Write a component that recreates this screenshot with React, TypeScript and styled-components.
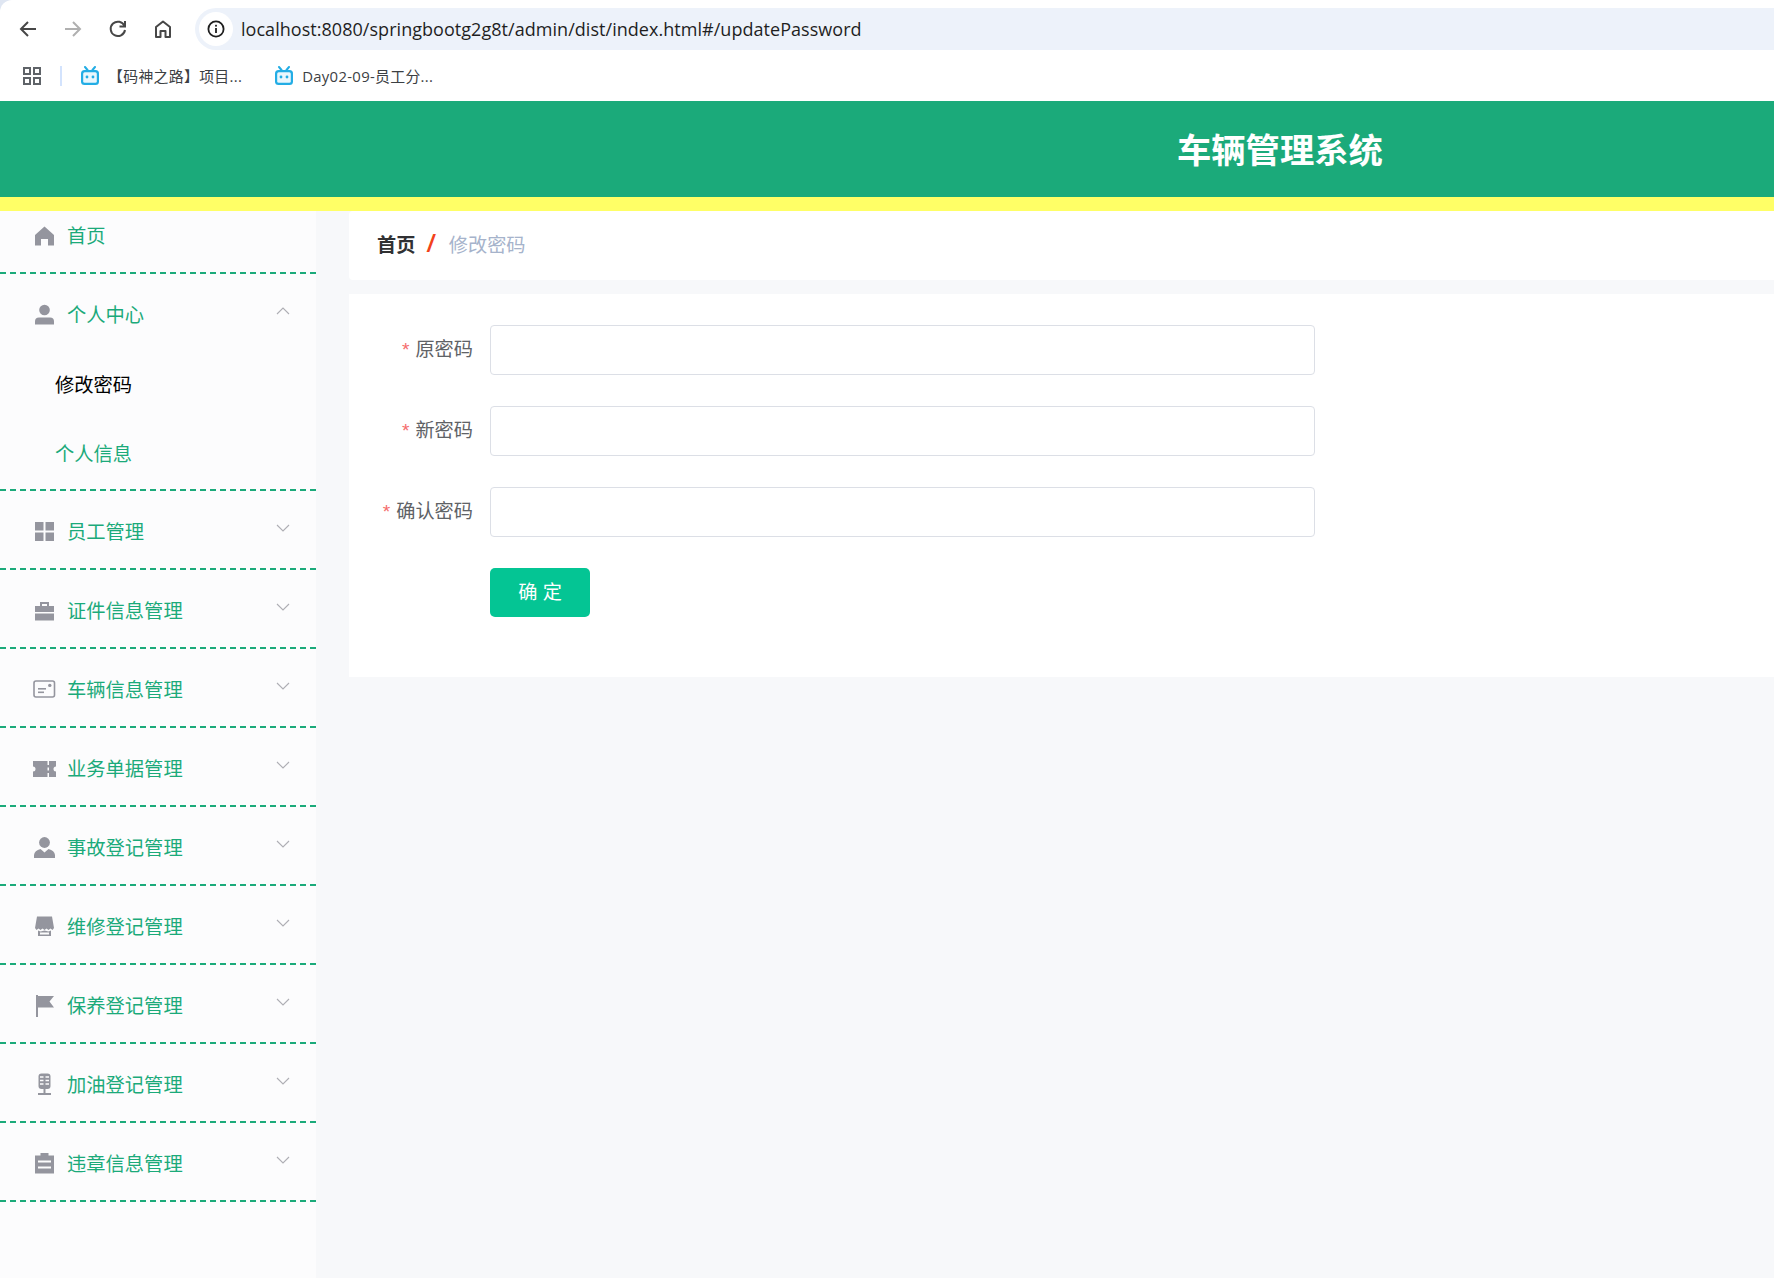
import React from "react";
import styled, { createGlobalStyle } from "styled-components";

const FONT = `"Liberation Sans", "Noto Sans CJK SC", sans-serif`;

const GlobalStyle = createGlobalStyle`
  html, body {
    margin: 0;
    padding: 0;
    background: #dfe6f2;
    overflow: hidden;
  }
  * {
    box-sizing: border-box;
  }
`;

const Page = styled.div`
  width: 1774px;
  height: 1278px;
  font-family: ${FONT};
  display: flex;
  flex-direction: column;
`;

/* browser chrome */
const BrowserTop = styled.div`
  height: 101px;
  background: #fff;
  border-top-left-radius: 12px;
`;

const Toolbar = styled.div`
  height: 58px;
  padding-top: 8px;
  display: flex;
  align-items: flex-start;
`;

const NavButton = styled.span`
  width: 45px;
  height: 42px;
  display: flex;
  align-items: center;
  justify-content: center;
  flex: none;
`;

const NavGroup = styled.div`
  width: 195px;
  padding-left: 5px;
  display: flex;
`;

const AddressBar = styled.div`
  flex: 1;
  height: 42px;
  display: flex;
  align-items: center;
  background: #edf2fa;
  border-radius: 21px 0 0 21px;
  padding-left: 4px;
`;

const InfoBadge = styled.span`
  width: 34px;
  height: 34px;
  border-radius: 50%;
  background: #fff;
  display: flex;
  align-items: center;
  justify-content: center;
  margin-right: 8px;
`;

const UrlText = styled.span`
  font-family: "Open Sans", ${FONT};
  font-size: 18px;
  color: #1f1f1f;
  letter-spacing: 0.04px;
`;

const BookmarkBar = styled.div`
  height: 43px;
  padding: 0 0 8px 21px;
  display: flex;
  align-items: center;
`;

const BookmarkDivider = styled.span`
  width: 2px;
  height: 20px;
  background: #d3e3fd;
  margin: 0 18px 0 17px;
`;

const Bookmark = styled.span`
  display: flex;
  align-items: center;
  gap: 8px;
  margin-right: 32px;
  font-family: "Open Sans", ${FONT};
  font-size: 14.9px;
  letter-spacing: 0.3px;
  color: #3c4043;
`;

/* app header */
const AppHeader = styled.header`
  height: 110px;
  background: #1baa7a;
  border-bottom: 14px solid #ffff66;
  padding-left: 1177px;
  display: flex;
  align-items: center;
`;

const AppTitle = styled.h1`
  margin: -2px 0 0;
  font-size: 34.3px;
  font-weight: 700;
  color: #fff;
`;

const Body = styled.div`
  flex: 1;
  display: flex;
  background: #f7f8fa;
`;

/* sidebar */
const Sidebar = styled.nav`
  width: 316px;
  flex: none;
  background: #fcfcfd;
`;

const MenuGroup = styled.div`
  border-bottom: 2px dashed #1baa7a;
`;

const MenuRow = styled.div<{ $height: number; $top?: number; $bottom?: number }>`
  height: ${(p) => p.$height}px;
  padding: ${(p) => p.$top ?? 0}px 26px ${(p) => p.$bottom ?? 0}px 32px;
  display: flex;
  align-items: center;
`;

const MenuIcon = styled.span`
  width: 24px;
  height: 24px;
  flex: none;
  margin: -2px 11px 0 0;
  color: #94959e;
`;

const MenuLabel = styled.span`
  flex: 1;
  font-size: 19.3px;
  line-height: 28px;
  color: #1baa7a;
`;

const Chevron = styled.svg`
  width: 14px;
  height: 8px;
  margin-top: -9px;
  flex: none;
`;

const SubList = styled.div`
  padding: 0;
`;

const SubItem = styled.div<{ $active?: boolean }>`
  height: 69px;
  padding-left: 55px;
  font-size: 19.3px;
  line-height: 69px;
  color: ${(p) => (p.$active ? "#000" : "#1baa7a")};
`;

/* main */
const Main = styled.main`
  flex: 1;
  padding-left: 33px;
`;

const Breadcrumb = styled.div`
  height: 69px;
  margin-bottom: 14px;
  padding: 0 0 4px 28px;
  background: #fff;
  border-radius: 4px 0 0 4px;
  display: flex;
  align-items: center;
  font-size: 19.2px;
`;

const CrumbRoot = styled.span`
  font-weight: 700;
  color: #303133;
`;

const CrumbSlash = styled.span`
  margin: 0 15px 0 12px;
  font-size: 23px;
  line-height: 24px;
  font-weight: 700;
  font-style: italic;
  color: #f2421b;
`;

const CrumbCurrent = styled.span`
  color: #a6b3cb;
`;

const FormPanel = styled.form`
  height: 383px;
  padding-top: 31px;
  background: #fff;
`;

const FormRow = styled.div`
  display: flex;
  align-items: center;
  height: 50px;
  margin-bottom: 31px;
`;

const FieldLabel = styled.label`
  width: 124px;
  margin-right: 17px;
  margin-top: -4px;
  text-align: right;
  font-size: 19.2px;
  color: #606266;
`;

const Required = styled.span`
  margin-right: 6px;
  color: #f56c6c;
  font-size: 19.2px;
`;

const TextField = styled.input`
  width: 825px;
  height: 50px;
  border: 1px solid #dcdfe6;
  border-radius: 4px;
  background: #fff;
  outline: none;
`;

const SubmitRow = styled.div`
  padding-left: 141px;
`;

const SubmitButton = styled.button`
  width: 100px;
  height: 49px;
  border: none;
  border-radius: 5px;
  background: #04c594;
  color: #fff;
  font-family: ${FONT};
  font-size: 19.2px;
  padding: 0 0 4px;
`;

/* icons */
const Icon24 = ({ children }: { children: React.ReactNode }) => (
  <svg width="24" height="24" viewBox="0 0 24 24" fill="currentColor">
    {children}
  </svg>
);

const HomeIcon = () => (
  <Icon24>
    <path d="M12.5 2.5 L22 11 V21.5 H16 V15 H9 V21.5 H3 V11 Z" />
  </Icon24>
);
const UserIcon = () => (
  <Icon24>
    <circle cx="12.5" cy="7" r="5.3" />
    <path d="M3 21.5 V18.5 Q3 14.5 7 14.5 H18 Q22 14.5 22 18.5 V21.5 Z" />
  </Icon24>
);
const GridIcon = () => (
  <Icon24>
    <rect x="3" y="2" width="8.5" height="8.5" />
    <rect x="13.5" y="2" width="8.5" height="8.5" />
    <rect x="3" y="12.5" width="8.5" height="8.5" />
    <rect x="13.5" y="12.5" width="8.5" height="8.5" />
  </Icon24>
);
const BriefcaseIcon = () => (
  <Icon24>
    <path d="M8 7 V3 H17 V7 H15 V5 H10 V7 Z" />
    <rect x="3" y="7" width="19" height="6" />
    <rect x="3" y="14.5" width="19" height="7" />
  </Icon24>
);
const PostcardIcon = () => (
  <Icon24>
    <rect x="2" y="3" width="20.5" height="16" rx="2" fill="none" stroke="currentColor" strokeWidth="1.6" />
    <rect x="6" y="10" width="8" height="1.6" />
    <rect x="6" y="13.5" width="6" height="1.6" />
    <circle cx="17.8" cy="7.4" r="1.7" />
  </Icon24>
);
const TicketIcon = () => (
  <Icon24>
    <path
      fillRule="evenodd"
      d="M1 4 H24 V9.5 A2.5 2.5 0 0 0 24 14.5 V20 H1 V14.5 A2.5 2.5 0 0 0 1 9.5 Z M15.5 4 V8 H17 V4 Z M15.5 10.5 V13.5 H17 V10.5 Z M15.5 16 V20 H17 V16 Z"
    />
  </Icon24>
);
const CustomIcon = () => (
  <Icon24>
    <circle cx="12.5" cy="6.5" r="5.4" />
    <path d="M2 22 V19 Q2.5 14.5 8.5 13 L12.5 16.5 L16.5 13 Q22.5 14.5 23 19 V22 Z" />
  </Icon24>
);
const ShopIcon = () => (
  <Icon24>
    <path d="M5 1.5 H20 L22 13 L20.5 15 L18.5 13.5 L16.5 15 L14.5 13.5 L12.5 15 L10.5 13.5 L8.5 15 L6.5 13.5 L4.5 15 L3 13 Z" />
    <path fillRule="evenodd" d="M6 15.5 L8.5 16.5 L12.5 15.5 L16.5 16.5 L19 15.5 V21 H6 Z M8 17.5 V19.5 H17 V17.5 Z" />
  </Icon24>
);
const FlagIcon = () => (
  <Icon24>
    <rect x="4" y="1" width="2" height="22" />
    <path d="M6 2 H22 L17.5 7.5 L22 13.5 H6 Z" />
  </Icon24>
);
const MicIcon = () => (
  <Icon24>
    <path d="M9.5 0.5 H15.5 Q18.5 0.5 18.5 3.5 V13 Q18.5 16 15.5 16 H9.5 Q6.5 16 6.5 13 V3.5 Q6.5 0.5 9.5 0.5 Z" />
    <path d="M8 4 H11.5 M13.5 4 H17 M8 7.5 H11.5 M13.5 7.5 H17 M8 11 H11.5 M13.5 11 H17" stroke="#fcfcfd" strokeWidth="1.4" />
    <rect x="11.5" y="16" width="2" height="4" />
    <rect x="6" y="20" width="13" height="2" />
  </Icon24>
);
const OrderIcon = () => (
  <Icon24>
    <path
      fillRule="evenodd"
      d="M3 3.5 H8.5 V1 H16.5 V3.5 H22 V21.5 H3 Z M6 8.5 V10.5 H19 V8.5 Z M6 14.5 V16.5 H19 V14.5 Z"
    />
  </Icon24>
);

const BiliIcon = () => (
  <svg width="20" height="20" viewBox="0 0 20 20" fill="none">
    <path d="M5 1 L7.5 4 M15 1 L12.5 4" stroke="#23ade5" strokeWidth="2" strokeLinecap="round" />
    <rect x="1" y="4" width="18" height="15" rx="3.5" fill="#23ade5" />
    <rect x="3.2" y="6.2" width="13.6" height="10.6" rx="1.5" fill="#eaf7fd" />
    <circle cx="7" cy="11" r="1.4" fill="#23ade5" />
    <circle cx="13" cy="11" r="1.4" fill="#23ade5" />
  </svg>
);

type MenuEntry = { label: string; icon: React.ReactNode };

const menuEntries: MenuEntry[] = [
  { label: "员工管理", icon: <GridIcon /> },
  { label: "证件信息管理", icon: <BriefcaseIcon /> },
  { label: "车辆信息管理", icon: <PostcardIcon /> },
  { label: "业务单据管理", icon: <TicketIcon /> },
  { label: "事故登记管理", icon: <CustomIcon /> },
  { label: "维修登记管理", icon: <ShopIcon /> },
  { label: "保养登记管理", icon: <FlagIcon /> },
  { label: "加油登记管理", icon: <MicIcon /> },
  { label: "违章信息管理", icon: <OrderIcon /> },
];

const fields = ["原密码", "新密码", "确认密码"];

const Caret = ({ up }: { up?: boolean }) => (
  <Chevron viewBox="0 0 14 8">
    <polyline points={up ? "1,7 7,1 13,7" : "1,1 7,7 13,1"} fill="none" stroke="#aeaeb4" strokeWidth="1.1" />
  </Chevron>
);

const App = () => (
  <Page>
    <GlobalStyle />
    <BrowserTop>
      <Toolbar>
        <NavGroup>
          <NavButton>
            <svg width="20" height="20" viewBox="0 0 20 20" fill="none" stroke="#474747" strokeWidth="2">
              <path d="M18 10 H3 M10 3 L3 10 L10 17" />
            </svg>
          </NavButton>
          <NavButton>
            <svg width="20" height="20" viewBox="0 0 20 20" fill="none" stroke="#b0b0b0" strokeWidth="2">
              <path d="M2 10 H17 M10 3 L17 10 L10 17" />
            </svg>
          </NavButton>
          <NavButton>
            <svg width="20" height="20" viewBox="0 0 20 20" fill="none" stroke="#474747" strokeWidth="2">
              <path d="M16.5 7 A7.2 7.2 0 1 0 17 11" />
              <path d="M17 2 V7.5 H11.5" />
            </svg>
          </NavButton>
          <NavButton>
            <svg width="20" height="20" viewBox="0 0 20 20" fill="none" stroke="#474747" strokeWidth="2">
              <path d="M3 18 V8 L10 2.5 L17 8 V18 H12.5 V12 H7.5 V18 Z" strokeLinejoin="round" />
            </svg>
          </NavButton>
        </NavGroup>
        <AddressBar>
          <InfoBadge>
            <svg width="20" height="20" viewBox="0 0 20 20" fill="none">
              <circle cx="10" cy="10" r="7.6" stroke="#1f1f1f" strokeWidth="1.8" />
              <rect x="9.1" y="9" width="1.8" height="5" fill="#1f1f1f" />
              <rect x="9.1" y="5.8" width="1.8" height="1.8" fill="#1f1f1f" />
            </svg>
          </InfoBadge>
          <UrlText>localhost:8080/springbootg2g8t/admin/dist/index.html#/updatePassword</UrlText>
        </AddressBar>
      </Toolbar>
      <BookmarkBar>
        <svg width="22" height="22" viewBox="0 0 22 22" fill="none" stroke="#5f6368" strokeWidth="2">
          <rect x="3" y="3" width="6" height="6" />
          <rect x="13" y="3" width="6" height="6" />
          <rect x="3" y="13" width="6" height="6" />
          <rect x="13" y="13" width="6" height="6" />
        </svg>
        <BookmarkDivider />
        <Bookmark>
          <BiliIcon />
          【码神之路】项目...
        </Bookmark>
        <Bookmark>
          <BiliIcon />
          Day02-09-员工分...
        </Bookmark>
      </BookmarkBar>
    </BrowserTop>

    <AppHeader>
      <AppTitle>车辆管理系统</AppTitle>
    </AppHeader>

    <Body>
      <Sidebar>
        <MenuGroup>
          <MenuRow $height={61} $bottom={10}>
            <MenuIcon>
              <HomeIcon />
            </MenuIcon>
            <MenuLabel>首页</MenuLabel>
          </MenuRow>
        </MenuGroup>
        <MenuGroup>
          <MenuRow $height={77} $top={6}>
            <MenuIcon>
              <UserIcon />
            </MenuIcon>
            <MenuLabel>个人中心</MenuLabel>
            <Caret up />
          </MenuRow>
          <SubList>
            <SubItem $active>修改密码</SubItem>
            <SubItem>个人信息</SubItem>
          </SubList>
        </MenuGroup>
        {menuEntries.map((entry) => (
          <MenuGroup key={entry.label}>
            <MenuRow $height={77} $top={6}>
              <MenuIcon>{entry.icon}</MenuIcon>
              <MenuLabel>{entry.label}</MenuLabel>
              <Caret />
            </MenuRow>
          </MenuGroup>
        ))}
      </Sidebar>

      <Main>
        <Breadcrumb>
          <CrumbRoot>首页</CrumbRoot>
          <CrumbSlash>/</CrumbSlash>
          <CrumbCurrent>修改密码</CrumbCurrent>
        </Breadcrumb>
        <FormPanel onSubmit={(e) => e.preventDefault()}>
          {fields.map((name) => (
            <FormRow key={name}>
              <FieldLabel>
                <Required>*</Required>
                {name}
              </FieldLabel>
              <TextField type="password" />
            </FormRow>
          ))}
          <SubmitRow>
            <SubmitButton type="submit">确 定</SubmitButton>
          </SubmitRow>
        </FormPanel>
      </Main>
    </Body>
  </Page>
);

export default App;
